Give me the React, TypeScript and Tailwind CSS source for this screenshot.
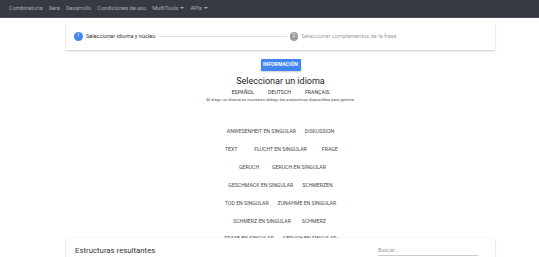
import React from "react";

const rows: string[][] = [
  ["ANWESENHEIT EN SINGULAR", "DISKUSSION"],
  ["TEXT", "FLUCHT EN SINGULAR", "FRAGE"],
  ["GERUCH", "GERUCH EN SINGULAR"],
  ["GESCHMACK EN SINGULAR", "SCHMERZEN"],
  ["TOD EN SINGULAR", "ZUNAHME EN SINGULAR"],
  ["SCHMERZ EN SINGULAR", "SCHMERZ"],
  ["FRASE EN SINGULAR", "GERUCH EN SINGULAR"],
];

function Caret() {
  return <span className="inline-block ml-[2px] align-middle w-0 h-0 border-l-[2px] border-r-[2px] border-t-[2.5px] border-l-transparent border-r-transparent border-t-[#a9adb3]" />;
}

export default function App() {
  return (
    <div className="w-[539px] h-[257px] overflow-hidden bg-white" style={{ fontFamily: "Roboto, 'Liberation Sans', sans-serif" }}>
      <nav className="h-[18px] bg-[#363b43] border-b border-[#4a5058] flex items-center pl-[9px] gap-[6px] text-[5.6px] text-[#a9adb3]">
        <span>Combinatoria</span>
        <span>Xera</span>
        <span>Desarrollo</span>
        <span>Condiciones de uso</span>
        <span className="flex items-center">MultiTools<Caret /></span>
        <span className="flex items-center">APIs<Caret /></span>
      </nav>

      <div className="ml-[66px] w-[429px]">
        <div className="mt-[5px] h-[27px] bg-white shadow-[0_1px_2px_rgba(0,0,0,0.2),0_0_1px_rgba(0,0,0,0.08)] flex items-center pl-[8px]">
          <div className="shrink-0 w-[8.5px] h-[8.5px] rounded-full bg-[#4285f4] text-white text-[4.5px] flex items-center justify-center">1</div>
          <span className="shrink-0 ml-[3.5px] text-[5.6px] text-[#333] whitespace-nowrap">Seleccionar idioma y núcleo</span>
          <div className="shrink-0 w-[128px] mx-[3px] h-px bg-[#e0e0e0]" />
          <div className="shrink-0 w-[8.5px] h-[8.5px] rounded-full bg-[#9e9e9e] text-white text-[4.5px] flex items-center justify-center">2</div>
          <span className="shrink-0 ml-[3.5px] text-[5.6px] text-[#9e9e9e] whitespace-nowrap">Seleccionar complementos de la frase</span>
        </div>

        <div className="flex flex-col items-center">
          <button className="mt-[9px] w-[40px] h-[12px] bg-[#4285f4] text-white text-[5px] font-bold tracking-[0.1px] rounded-[1px] shadow-[0_1px_2px_rgba(0,0,0,0.2)] flex items-center justify-center">INFORMACIÓN</button>
          <h1 className="mt-[3.5px] text-[9px] leading-[12px] text-[#212121]">Seleccionar un idioma</h1>
          <div className="mt-[1.5px] flex gap-[14px] text-[5.2px] text-[#333] leading-[8px]">
            <span>ESPAÑOL</span>
            <span>DEUTSCH</span>
            <span>FRANÇAIS</span>
          </div>
          <p className="mt-[1px] text-[4.2px] text-[#555] leading-[6px]">Al elegir un idioma se muestran debajo los sustantivos disponibles para generar</p>
          <div className="mt-[20px] h-[114.9px] overflow-hidden flex flex-col">
            {rows.map((r, i) => (
              <div key={i} className="h-[17.9px] shrink-0 flex justify-center gap-[3px]">
                {r.map((w, j) => (
                  <span key={j} className="min-w-[34px] px-[3px] flex items-center justify-center text-[5.2px] text-[#4a4a4a] whitespace-nowrap">{w}</span>
                ))}
              </div>
            ))}
          </div>
        </div>

        <div className="h-[30px] bg-white shadow-[0_1px_2px_rgba(0,0,0,0.2),0_0_1px_rgba(0,0,0,0.1)] flex items-start pt-[8px] px-[9px]">
          <span className="text-[7.8px] text-[#333] leading-[10px]">Estructuras resultantes</span>
          <div className="ml-auto mr-[8px] w-[100px] border-b border-[#ccc] h-[10px] flex items-center">
            <span className="text-[5.4px] text-[#9e9e9e]">Buscar...</span>
          </div>
        </div>
      </div>
    </div>
  );
}
